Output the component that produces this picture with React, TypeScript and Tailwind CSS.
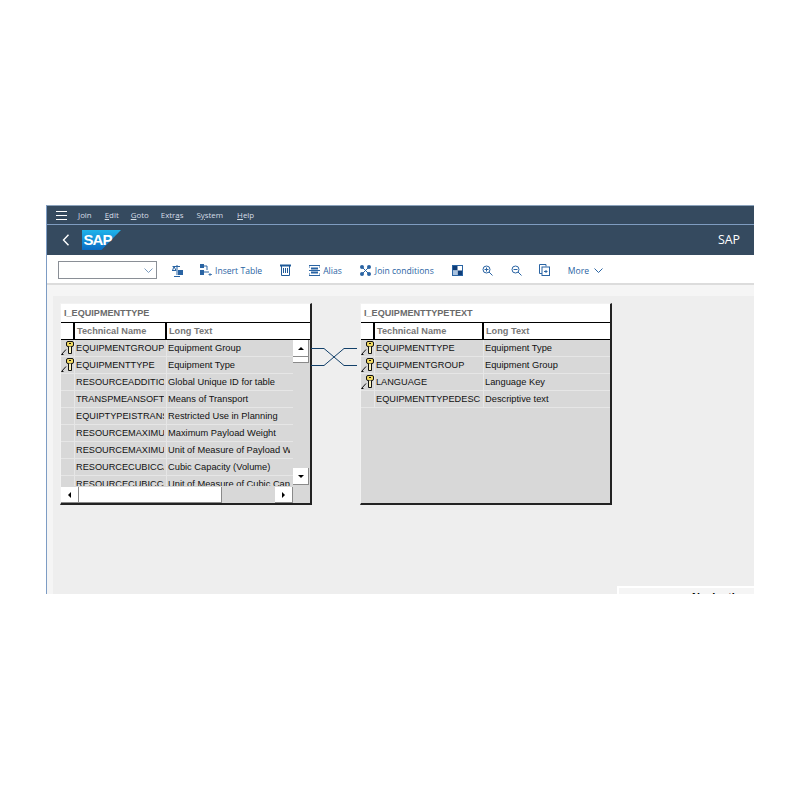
import React from "react";

const tf = "font-['Liberation_Sans',Arial,sans-serif]";

function KeyIcon() {
  return (
    <svg width="14" height="16" viewBox="0 0 14 16" className="block shrink-0">
      <path d="M0.5 14.5 L5 9.5 M0.5 14.5 L2.5 14.5" stroke="#111" strokeWidth="1" fill="none" />
      <rect x="5.5" y="1.5" width="7" height="5" rx="1.5" fill="#f0d860" stroke="#111" strokeWidth="1" />
      <rect x="8" y="3" width="2" height="1" fill="#111" />
      <path d="M7.5 6.5 V13.5 H10.5 V6.5" fill="#fbf3c0" stroke="#111" strokeWidth="1" />
    </svg>
  );
}

type Row = { k?: boolean; a: string; b: string };

function Btn({ glyph, className }: { glyph: React.ReactNode; className: string }) {
  return (
    <div className={`flex items-center justify-center bg-white border-r border-b border-[#8a8a8a] ${className}`}>
      {glyph}
    </div>
  );
}

const up = <svg width="6" height="3" viewBox="0 0 6 3" className="block"><polygon points="0,3 6,3 3,0" fill="#000" /></svg>;
const down = <svg width="6" height="3" viewBox="0 0 6 3" className="block"><polygon points="0,0 6,0 3,3" fill="#000" /></svg>;
const left = <svg width="3" height="6" viewBox="0 0 3 6" className="block"><polygon points="3,0 3,6 0,3" fill="#000" /></svg>;
const right = <svg width="3" height="6" viewBox="0 0 3 6" className="block"><polygon points="0,0 0,6 3,3" fill="#000" /></svg>;

function TableCard({
  title,
  rows,
  col1,
  clip1,
  col2,
  scroll,
}: {
  title: string;
  rows: Row[];
  col1: string;
  clip1: string;
  col2: string;
  scroll?: boolean;
}) {
  return (
    <div className={`w-[252px] h-[202px] bg-[#d8d8d8] border-t border-t-[#f2f2f2] border-l border-l-[#f2f2f2] border-r-2 border-b-2 border-[#222] flex flex-col relative ${tf}`}>
      <div className="h-[18px] bg-white flex items-center pl-[3px] pt-[1px] text-[9.1px] font-bold text-[#6a6a6a] shrink-0 leading-none">{title}</div>
      <div className="h-[18px] bg-white border-y border-black flex shrink-0 text-[9.2px] font-bold text-[#777] leading-none">
        <div className="w-[14px] border-r-2 border-black shrink-0" />
        <div className={`${col1} border-r-2 border-black flex items-center pl-[2px] pt-[1px] shrink-0`}>Technical Name</div>
        <div className="flex items-center pl-[2px] pt-[1px]">Long Text</div>
      </div>
      <div className="relative flex-1 overflow-hidden">
        <div className={scroll ? "w-[232px] h-[146px] overflow-hidden" : ""}>
          {rows.map((r) => (
            <div key={r.a} className="h-[17px] flex border-b border-[#e6e6e6] text-[#111] leading-none">
              <div className="w-[14px] border-r border-[#e6e6e6] shrink-0 flex items-start">{r.k && <KeyIcon />}</div>
              <div className={`${col1} flex items-center pl-[1px] pt-[2px] border-r border-[#e6e6e6] shrink-0 text-[9.2px]`}>
                <div className={`${clip1} overflow-hidden whitespace-nowrap`}>{r.a}</div>
              </div>
              <div className={`${col2} overflow-hidden whitespace-nowrap flex items-center pl-[1px] pt-[2px] text-[9.3px]`}>{r.b}</div>
            </div>
          ))}
        </div>
        {scroll && (
          <>
            <div className="absolute left-[232px] top-0 w-[16px] h-[145px] flex flex-col bg-[#d8d8d8]">
              <Btn className="h-[17px] w-[16px]" glyph={up} />
              <div className="h-[6px] w-[16px] bg-white border-r border-b border-[#8a8a8a]" />
              <div className="flex-1" />
              <Btn className="h-[17px] w-[16px]" glyph={down} />
            </div>
            <div className="absolute left-0 bottom-0 w-[232px] h-[16px] flex bg-[#d8d8d8]">
              <Btn className="w-[18px] h-[16px]" glyph={left} />
              <div className="w-[143px] h-[16px] bg-white border-r border-b border-[#8a8a8a]" />
              <div className="flex-1" />
              <Btn className="w-[18px] h-[16px]" glyph={right} />
            </div>
          </>
        )}
      </div>
    </div>
  );
}

const c = "#2a64a3";

const ico = {
  compare: (
    <svg width="11" height="13" viewBox="0 0 11 13" fill="none" stroke={c} strokeWidth="1"><path d="M5 1V11M2 12.5H8M.5 2.5H8M2 2.5 .5 6.5H4ZM0 6.5H4" /><rect x="6" y="6" width="5" height="5" fill={c} stroke="none" /></svg>
  ),
  insert: (
    <svg width="12" height="12" viewBox="0 0 12 12" fill="none"><rect x="0" y="0" width="4" height="4" fill={c} /><rect x="0" y="6" width="4" height="5" fill={c} /><path d="M4 2H7V6M4 8H9" stroke={c} /><path d="M10 9V12M8.5 10.5H12" stroke={c} strokeWidth="0.8" /></svg>
  ),
  trash: (
    <svg width="11" height="12" viewBox="0 0 11 12" fill="none" stroke="#1f5a99"><path d="M0 1.5H11" strokeWidth="2" /><path d="M1.5 2V11.5H9.5V2" /><path d="M3.5 4V9M5.5 4V9M7.5 4V9" /></svg>
  ),
  alias: (
    <svg width="11" height="11" viewBox="0 0 11 11" fill="none" stroke={c}><path d="M0 .5H11M0 10.5H11M0 .5V3M11 .5V3M0 8V10.5M11 8V10.5" /><rect x="2" y="2.5" width="7" height="2" fill={c} stroke="none" /><rect x="2" y="6.5" width="7" height="2" fill={c} stroke="none" /><path d="M0 5.5H11" /></svg>
  ),
  join: (
    <svg width="11" height="11" viewBox="0 0 11 11" fill={c}><circle cx="2" cy="2" r="2" /><circle cx="9" cy="2" r="2" /><circle cx="2" cy="9" r="2" /><circle cx="9" cy="9" r="2" /><path d="M3 3 8 8M8 3 3 8" stroke={c} fill="none" /></svg>
  ),
  layout: (
    <svg width="11" height="11" viewBox="0 0 11 11"><rect x=".5" y=".5" width="10" height="10" fill="#fff" stroke={c} /><rect x="1" y="1" width="4.5" height="4.5" fill="#0f3d78" /><rect x="5.5" y="5.5" width="4.5" height="4.5" fill="#0f3d78" /><rect x="1" y="5.5" width="4.5" height="4.5" fill="#a9c3e0" /></svg>
  ),
  zoomIn: (
    <svg width="11" height="11" viewBox="0 0 11 11" fill="none" stroke={c}><circle cx="4.5" cy="4.5" r="3.5" /><path d="M7 7 10.5 10.5M2.5 4.5H6.5M4.5 2.5V6.5" /></svg>
  ),
  zoomOut: (
    <svg width="11" height="11" viewBox="0 0 11 11" fill="none" stroke={c}><circle cx="4.5" cy="4.5" r="3.5" /><path d="M7 7 10.5 10.5M2.5 4.5H6.5" /></svg>
  ),
  fit: (
    <svg width="11" height="12" viewBox="0 0 11 12" fill="none" stroke={c}><path d="M3 9.5H.5V.5H7V2.5" /><rect x="3" y="3" width="7.5" height="8.5" /><path d="M5 7.5H8.5M7 6V9" /></svg>
  ),
};

const tb = "text-[8.6px] text-[#2a64a3] leading-none pt-[2px] font-['Open_Sans',sans-serif]";

const leftRows: Row[] = [
  { k: true, a: "EQUIPMENTGROUP", b: "Equipment Group" },
  { k: true, a: "EQUIPMENTTYPE", b: "Equipment Type" },
  { a: "RESOURCEADDITIONALUUID", b: "Global Unique ID for table" },
  { a: "TRANSPMEANSOFTRANSPORT", b: "Means of Transport" },
  { a: "EQUIPTYPEISTRANSPORT", b: "Restricted Use in Planning" },
  { a: "RESOURCEMAXIMUMPAYLOAD", b: "Maximum Payload Weight" },
  { a: "RESOURCEMAXIMUMUNIT", b: "Unit of Measure of Payload Weight" },
  { a: "RESOURCECUBICCAPACITY", b: "Cubic Capacity (Volume)" },
  { a: "RESOURCECUBICCAPUNIT", b: "Unit of Measure of Cubic Capacity" },
];

const rightRows: Row[] = [
  { k: true, a: "EQUIPMENTTYPE", b: "Equipment Type" },
  { k: true, a: "EQUIPMENTGROUP", b: "Equipment Group" },
  { k: true, a: "LANGUAGE", b: "Language Key" },
  { a: "EQUIPMENTTYPEDESC", b: "Descriptive text" },
];

const menu: [string, string, string, string][] = [
  ["", "J", "oin", "ml-[11px]"],
  ["", "E", "dit", "ml-[13px]"],
  ["", "G", "oto", "ml-[12px]"],
  ["Extr", "a", "s", "ml-[12px]"],
  ["S", "y", "stem", "ml-[13px]"],
  ["", "H", "elp", "ml-[14px]"],
];

export default function App() {
  return (
    <div className="w-[800px] h-[800px] bg-white pt-[205px] pl-[46px] overflow-hidden">
      <div className="w-[708px] h-[389px] border-l border-[#7d9cc4] flex flex-col overflow-hidden bg-white">
        <div className="h-[19px] bg-[#354a5f] flex items-center pl-[9px] pt-[1px] border-t border-[#8ca3bc] shrink-0 font-['Open_Sans',sans-serif] text-[7.9px] text-[#d5dde6] leading-none">
          <svg width="11" height="9" viewBox="0 0 11 9" stroke="#fff" className="shrink-0"><path d="M0 .5H11M0 4.5H11M0 8.5H11" /></svg>
          {menu.map(([a, u, z, m]) => (
            <span key={u + z} className={m}>{a}<span className="underline">{u}</span>{z}</span>
          ))}
        </div>
        <div className="h-[31px] bg-[#354a5f] border-t border-[#7f9cc0] flex items-center pl-[15px] pr-[14px] shrink-0">
          <svg width="8" height="12" viewBox="0 0 8 12" fill="none" stroke="#fff" strokeWidth="1.4" className="shrink-0"><path d="M6.5 .8 1.5 6 6.5 11.2" /></svg>
          <svg width="39" height="20" viewBox="0 0 39 20" className="ml-[12px] shrink-0">
            <defs>
              <linearGradient id="sapg" x1="0" y1="0" x2="0" y2="1">
                <stop offset="0" stopColor="#1fb3ea" />
                <stop offset="1" stopColor="#0a6cc4" />
              </linearGradient>
            </defs>
            <polygon points="0,0 39,0 19.5,20 0,20" fill="url(#sapg)" />
            <text x="1.5" y="15" fontFamily="'Liberation Sans',sans-serif" fontWeight="700" fontSize="15" fill="#fff" letterSpacing="-0.9">SAP</text>
          </svg>
          <span className="ml-auto pt-[1px] text-[12.4px] text-white leading-none font-['Open_Sans',sans-serif]">SAP</span>
        </div>
        <div className="h-[30px] bg-white border-b-2 border-[#dcdcdc] flex items-center shrink-0 pl-[11px] pt-[2px]">
          <div className="w-[99px] h-[18px] border border-[#8a8f96] flex items-center justify-end pr-[3px] shrink-0">
            <svg width="9" height="5" viewBox="0 0 9 5" fill="none" stroke="#7c9cc0"><path d="M.5 .5 4.5 4.5 8.5 .5" /></svg>
          </div>
          <span className="ml-[15px] flex">{ico.compare}</span>
          <span className="ml-[17px] flex">{ico.insert}</span>
          <span className={`ml-[3px] ${tb}`}>Insert Table</span>
          <span className="ml-[18px] flex">{ico.trash}</span>
          <span className="ml-[18px] flex">{ico.alias}</span>
          <span className={`ml-[3px] ${tb}`}>Alias</span>
          <span className="ml-[18px] flex">{ico.join}</span>
          <span className={`ml-[4px] ${tb}`}>Join conditions</span>
          <span className="ml-[18px] flex">{ico.layout}</span>
          <span className="ml-[19px] flex">{ico.zoomIn}</span>
          <span className="ml-[18px] flex">{ico.zoomOut}</span>
          <span className="ml-[17px] flex">{ico.fit}</span>
          <span className={`ml-[18px] ${tb}`}>More</span>
          <svg width="9" height="5" viewBox="0 0 9 5" fill="none" stroke={c} className="ml-[5px]"><path d="M.5 .5 4.5 4.5 8.5 .5" /></svg>
        </div>
        <div className="flex-1 bg-[#f5f5f5] pt-[11px] pl-[6px] min-h-0">
          <div className="relative w-full h-[320px] bg-[#eeeeee] overflow-hidden">
            <div className="absolute left-[7px] top-[7px]">
              <TableCard title="I_EQUIPMENTTYPE" rows={leftRows} col1="w-[92px]" clip1="w-[88px]" col2="w-[123px]" scroll />
            </div>
            <div className="absolute left-[307px] top-[7px]">
              <TableCard title="I_EQUIPMENTTYPETEXT" rows={rightRows} col1="w-[109px]" clip1="w-[105px]" col2="w-[125px]" />
            </div>
            <svg width="50" height="30" viewBox="0 0 50 30" fill="none" stroke="#12406a" className="absolute left-[258px] top-[47px]">
              <path d="M0 5.5H13L33 22.5H46" />
              <path d="M0 22.5H13L33 5.5H46" />
            </svg>
            <div className="absolute right-0 top-[290px] w-[137px] h-[30px] bg-white pl-[2px] pt-[2px]">
              <div className={`h-full bg-[#f5f5f5] pl-[73px] pt-[4px] text-[11px] font-bold text-black leading-none whitespace-nowrap ${tf}`}>Navigation</div>
            </div>
          </div>
        </div>
      </div>
    </div>
  );
}
